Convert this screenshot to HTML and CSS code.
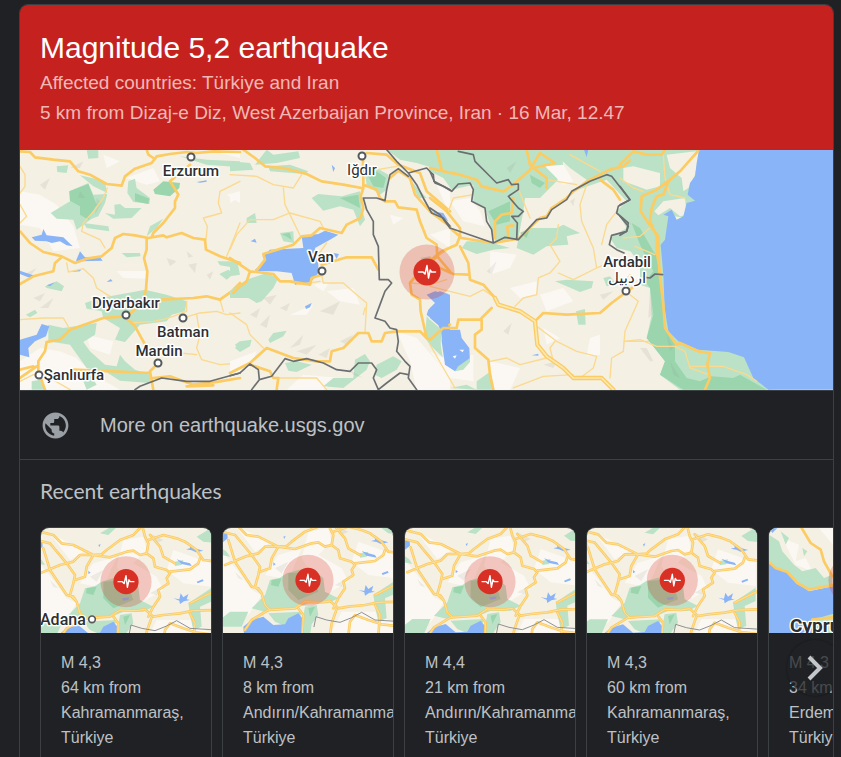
FILE: index.html
```html
<!DOCTYPE html>
<html lang="en">
<head>
<meta charset="utf-8">
<meta name="viewport" content="width=device-width, initial-scale=1">
<title>Magnitude 5,2 earthquake</title>
<link rel="stylesheet" href="styles.css">
</head>
<body>
<svg class="defs" aria-hidden="true">
  <defs>
    <symbol id="pulse" viewBox="-28 -28 56 56">
      <circle class="halo" r="27.5"/>
      <circle class="dot" r="13.6"/>
      <path class="wave" d="M-8.500 0H-4l2 2L0-6.500 1.500 6 3.200-2 4.500 0H8.500"/>
    </symbol>
    <!-- Terrain around Kahramanmaraş, shared by four cards -->
    <path id="maras-roads" d="M30 35 70 45 95 70 130 75 160 90 190 105 215 103 230 90 270 60 310 45 330 24 335 10M20 60 60 70 85 100 110 130 135 165 130 190 120 225 140 245 150 280 165 295M40 85 60 150 80 180 110 225 130 230 140 245M30 160 90 135 130 125 150 105 190 105 240 112 290 95 310 92 330 105 350 100M335 10 345 50 355 70 350 100 370 115 375 140 410 150 420 160 410 175 415 190 385 210 390 230 370 260 355 290M355 60 400 45 440 55 465 65 500 90 520 120 560 125M360 45 390 80 400 110 435 130M420 155 480 148 505 130 510 115M190 105 170 140 165 170 135 180M90 355 110 325 160 295 240 290 270 270 320 272 345 268 370 290 400 285 450 280 490 272 560 270M250 290 265 310 262 370M365 292 350 335 345 370M480 280 495 310 490 370M480 250 520 230 560 210M400 370 405 330 420 310 460 325 500 338 560 345"/>
    <g id="maras">
      <path class="land" d="M-20-20H600V400H-20Z"/>
      <path class="pale" d="M20 120 70 180 110 235 140 250 100 310 20 340ZM280 60 340 50 350 90 310 130 380 170 400 210 330 250 260 140ZM430 90 543 130V200L460 190 410 150ZM380 300 480 300 543 340V400H330ZM60 40 120 70 170 90 120 120 90 80ZM190 130 260 110 230 180 200 200 150 190Z"/>
      <path class="wood" d="M210 40 240 22 260 22 235 45ZM500 50 543 24 570 40V70L520 65ZM165 205 195 198 215 185 250 175 290 170 325 200 330 240 370 260 340 275 280 275 245 290 150 300 110 290 150 250ZM270 285 305 280 310 310 290 338 285 370 240 370 260 340ZM20 320 45 300 100 300 80 345H20ZM475 250 543 205V245L510 260 515 320 490 330 480 285ZM160 305 260 300 255 315 215 345 180 330ZM435 125 460 120 455 135 435 138ZM20 110 35 120 45 135 20 130Z"/>
      <path class="deep" d="M170 205 200 200 190 225 168 220ZM220 185 290 180 310 240 250 265 220 235ZM280 290 300 285 285 315Z"/>
      <path class="shade" d="M180 170 220 150 200 185ZM360 220 395 200 380 225ZM360 40 400 60 380 70ZM60 180 85 205 70 200Z"/>
      <path class="water" d="M90 400 85 345 110 325 145 315 175 340 210 338 220 320 250 305 262 320 258 400ZM468 88 480 85 479 70 488 83 520 92 498 97 485 91ZM430 235 448 238 452 220 460 232 475 222 470 238 480 240 462 244 450 252 448 242ZM440 118 460 125 480 130 485 138 455 132ZM500 185 518 178 521 183 503 190ZM275 235 298 232 295 240 280 242ZM20 60 37 65 38 80 20 95ZM205 75 212 72 208 82ZM175 152 182 158 175 162Z"/>
      <use class="road" href="#maras-roads"/>
      <use class="road-core" href="#maras-roads"/>
      <path class="border fine" d="M297 345 303 315 335 325 375 332 410 318 440 302 480 325 560 330"/>
    </g>
  </defs>
</svg>

<main class="panel">
  <header class="alert">
    <h1 class="alert-title">Magnitude 5,2 earthquake</h1>
    <p class="alert-line">Affected countries: Türkiye and Iran</p>
    <p class="alert-line">5 km from Dizaj-e Diz, West Azerbaijan Province, Iran · 16 Mar, 12.47</p>
  </header>

  <svg class="map" viewBox="20 150 813 240" preserveAspectRatio="xMidYMid slice" role="img" aria-label="Map of the earthquake area">
    <path class="land" d="M0 100H900V450H0Z"/>
    <!-- West: Erzurum to Şanlıurfa -->
    <g transform="translate(20 148) scale(.3333)">
      <path class="pale" d="M0 130 60 140 110 170 160 235 180 300 100 310 60 240 0 230ZM290 370 380 370V392L310 390ZM0 640 60 600 120 610 170 630 220 680 300 725H0ZM250 20 300 40 260 60ZM560 5H660V30ZM620 140 660 130V165ZM200 560 280 580 270 620 210 600ZM320 90 400 60 420 100 380 110Z"/>
      <path class="wood" d="M92 195 150 160 148 130 205 105 220 140 262 138 255 165 235 205 215 212 170 245 160 215 110 212ZM325 100 345 92 350 120 390 150 388 168 340 162 322 135ZM255 195 285 200 283 170 300 168 315 180 365 180 335 210 280 212ZM110 55 145 52 140 75 112 72ZM180 82 225 92 255 105 262 135 220 115ZM190 225 265 235 268 250 200 240ZM480 25 560 35 660 40V58L560 50ZM200 5H235V30L205 32ZM390 235 430 212 410 240 380 265ZM305 315 360 315 362 325 320 328ZM592 340 660 340 650 360 600 352ZM598 378 625 365 640 378 620 395ZM340 432 375 425 440 440 500 460 495 490 455 500 440 520 360 530 315 582 285 575 300 540 250 510 245 490 200 482 195 465 240 450ZM85 530 130 540 230 525 225 560 190 582 210 610 255 650 290 655 300 620 315 640 345 665 390 680V705L300 698 255 670 200 660 150 590 85 580ZM18 500 45 485 52 495 30 508ZM75 415 110 400 132 415 125 430 80 420ZM35 700 60 695 75 725H35ZM190 700 210 680 230 710 200 725ZM645 590 660 580V610ZM640 420 660 410V440Z"/>
      <path class="deep" d="M148 130 205 108 222 150 230 170 205 215 180 200 180 175 150 158ZM345 135 388 152 385 168 345 160ZM400 125 430 100 480 105 478 120 450 145 405 138Z"/>
      <path class="shade" d="M60 110 90 90 75 125ZM230 150 245 165 225 200ZM180 130 195 150 175 150ZM440 330 470 340 450 355ZM505 350 530 345 525 375ZM560 380 580 370 570 395ZM500 310 520 325 505 330ZM60 480 100 450 85 480ZM40 450 75 435 60 460ZM10 380 50 360 30 385ZM150 60 190 40 180 60Z"/>
      <path class="water" d="M35 268 65 260 70 243 80 262 130 268 158 295 140 292 120 280 95 285 80 280 45 278ZM168 338 180 310 195 328 240 328 248 338 180 340ZM0 368 35 380 55 383 30 390 0 378ZM150 372 185 362 180 370ZM80 412 105 403 90 415ZM260 402 272 393 278 400ZM0 575 50 560 65 528 88 535 78 565 45 580 25 600 28 628 0 620ZM530 102 560 97V101L540 104Z"/>
      <path class="lane" d="M660 100 600 130 595 165 605 195 550 210 562 235 558 275M0 55 15 80V115L0 135M0 170 20 205 0 225M262 120 250 150 225 185 190 225 185 250 240 275 255 300M140 345 145 372 190 362 220 390 230 420 270 445M330 525 400 520 440 512 500 490 500 460M490 510 540 495 590 490 620 500 660 495M0 515 70 510 130 510 150 545M530 500 540 560 530 600 545 635 600 650 660 645M660 225 620 325M415 620 480 615 530 620M600 455 610 490M0 700 40 680 90 690 150 725"/>
      <path id="roads-west" class="road" d="M0 10 30 12 45 28 100 35 150 40 175 70 210 80 260 108 305 113 315 85 345 62 395 45 410 25 450 18 500 12 530 15 580 10 660 12M380 5 385 20 400 30M0 250 30 285 70 312 125 325 165 345 200 332 245 325 275 300 285 270 310 258 345 262 385 270 430 262 440 268 485 255 520 270 555 275 558 305 600 325 660 345M0 408 40 385 100 370 105 345 125 328M510 50 450 100 460 115 475 140 465 160V180L430 225 400 255 395 268M380 270V305L372 330 382 370 378 425 365 470 318 505 250 510 150 545 120 575 80 582 75 610 55 640V670L75 725M425 455 520 450 560 445 600 455 635 430 660 405M318 510 345 535 370 580 385 610M415 645 390 670 400 725M0 690 50 655M160 665 390 675M400 690 450 685 520 710 600 700 660 690M0 665 40 655M500 715 580 712"/>
      <path class="border" d="M345 725 360 715 425 690 500 700 570 700 660 675"/>
    </g>
    <!-- Van and Iğdır -->
    <g transform="translate(230 148) scale(.3333)">
      <path class="pale" d="M290 430 370 420 390 470 330 460ZM500 550 560 570 620 640 660 680V725H560L540 640ZM0 640 80 610 60 660 0 680ZM250 410 300 400 280 430ZM480 200 520 210 490 230ZM620 110 660 130V200ZM180 500 250 470 230 500ZM220 680 330 690 280 725H170ZM0 140 25 150 0 165ZM600 260 660 240V300Z"/>
      <path class="wood" d="M110 5 130 20 205 10 210 30 140 45 75 50ZM0 40 60 45 70 65 0 70ZM115 55 180 50 235 70 225 78 120 70ZM405 80 440 60 475 80 470 125 450 140 410 110ZM245 150 265 138 335 145 390 130 395 180 405 215 390 235 370 185 330 175 280 188ZM150 255 190 250 192 285 160 280ZM50 210 75 195 80 225 50 225ZM0 430 50 395 110 375 145 390 130 420 95 460 80 465 55 450 0 450ZM15 600 30 580 65 575 60 595 30 612ZM115 575 130 555 170 548 160 565 120 585ZM165 645 200 640 245 650 200 672 175 668ZM375 635 405 618 420 640 410 665 340 720 280 715 310 690 370 690ZM440 650 490 625 515 640 500 665 455 690 435 680ZM590 505 625 545 638 628 600 590 585 570ZM470 5H660V80L610 60 560 45 510 35ZM0 345 25 355 30 380 0 385ZM540 95 590 150 565 150ZM570 330 600 325V345Z"/>
      <path class="deep" d="M415 85 440 70 468 90 460 120 430 115ZM155 258 180 255 185 275ZM330 150 385 140 390 180Z"/>
      <path class="shade" d="M90 530 120 500 110 540ZM150 480 180 465 170 490ZM200 610 260 590 230 620ZM265 620 300 600 290 630ZM330 580 370 560 350 590ZM180 600 220 560 210 590ZM60 500 90 480 80 510ZM270 490 330 460 310 500ZM100 450 140 440 120 470ZM350 660 400 690 370 680Z"/>
      <path class="water" d="M75 365 105 340 98 325 120 305 220 300 215 265 265 258 285 248 325 260 300 275 255 300 265 350V375L240 405 195 410 185 375 140 370 85 370ZM310 315 327 318 320 332ZM305 50 315 60 310 72ZM62 280 75 272 80 284ZM225 475 245 465 240 478 228 483ZM590 440 615 430 660 440V660L645 630 635 560 625 530 590 500 595 485 615 465ZM605 190 640 195 655 220Z"/>
      <path class="lane" d="M0 80 80 85 130 110 190 120 215 80M160 120 165 170 180 200 210 262M0 305 20 260 60 215 130 215 180 195 270 220 280 240M275 380 280 405 340 405 380 440 410 465 405 555M0 495 50 530 60 560 100 600M265 320 290 285M405 480 400 500M145 690 260 690 290 725M600 340 660 300M545 405 600 410 650 395M200 410 270 400M410 70 500 55"/>
      <path class="road" d="M40 5 75 30 105 55 160 60 230 78 275 100 340 110 395 120M400 30 398 60 400 85V120L392 145 400 180 392 210 350 230 335 255 270 240 245 262 215 265 190 290 100 318 105 335 80 368M0 330 30 350 60 370 50 400 30 415 10 435M60 370 130 378 150 400 180 400 240 410 245 390 275 380M275 350 310 340 350 328 425 328 445 365M400 110 440 125 450 150 465 160 495 160 505 178 560 185 570 220 590 270 620 290 622 325 660 370M480 90 505 68 540 90 555 140 600 190 660 235M410 15 470 20 505 50 570 75 590 130 660 190M622 325 570 370 540 405 545 440 570 455 572 490 590 570 600 575 660 530M590 570 570 550 500 550 465 555 455 580 425 580 415 555 385 555 340 600 305 610 300 640 260 640 190 630 110 600 60 645 0 675M60 650 120 670 130 690 145 690 140 725M620 5 625 60"/>
      <path class="border" d="M400 150 440 150 465 158 470 125 480 80 505 62 535 85M400 150 410 185 430 220V260L445 295 448 395 475 395 485 405 465 430 450 470 435 510 465 520 480 540 500 545 505 580 500 610 525 640 540 655 535 690 560 725M0 683 30 675 60 648 85 665 88 695 125 685 165 632 190 640 230 632 280 645 320 665 360 670 385 645 425 645 440 665 430 690 445 725 470 705 510 675 535 680M88 695 65 725M470 5 500 40 535 75 560 110 580 150 605 195 640 210 660 235M535 75 590 60 610 80 612 100 660 125"/>
    </g>
    <!-- Urmia to Ardabil -->
    <g transform="translate(430 148) scale(.3333)">
      <path class="wood" d="M0 5H395L400 60 380 100 330 150 285 150 280 190 265 270 195 280 165 180 130 160V110L65 125 40 90 0 70ZM360 5H660V340L600 310 560 300 540 270 590 240 560 190 590 160 530 95 430 130 470 95 420 60ZM265 275 300 240 380 240 400 230 450 255 410 265 415 290 350 295 310 320 260 300ZM95 300 110 280 170 280 240 300 190 305 140 318ZM375 400 410 395 490 400 485 420 450 432ZM438 490 465 483 467 530 445 530ZM520 390 540 385 560 410 530 415ZM60 720 110 710 140 725ZM140 700 175 675 200 690 190 725H140ZM0 515 35 545 30 610 0 590Z"/>
      <path class="pale" d="M60 160 120 150 150 190 165 235 100 220ZM330 440 400 420 430 460 350 490ZM180 310 260 320 240 360 180 380ZM480 570 510 560 510 620 470 625ZM240 420 320 400 320 440 270 450ZM0 610 60 640 130 620 130 700 60 690ZM180 640 270 660 240 725H190ZM340 540 390 570 350 590ZM540 325 620 345 650 400 560 385ZM345 55 400 50 430 100 400 110Z"/>
      <path class="deep" d="M175 190 240 160V220L200 230ZM300 80 345 105 330 120 305 105ZM600 225 650 270 660 320 620 280ZM270 255 300 240 290 270Z"/>
      <path class="shade" d="M220 550 245 525 235 560ZM170 370 200 340 185 380ZM340 650 380 640 370 660ZM420 160 435 150 430 175ZM230 60 260 40 240 75ZM510 440 550 430 520 455Z"/>
      <path class="water" d="M0 480 25 460 5 440 30 430 55 438 58 460 45 480 50 520 60 545 90 545 95 570 118 600 120 640 75 670 45 650 35 580V540L0 510ZM305 622 325 617 325 623ZM462 5H475L470 28Z"/>
      <path class="pale" d="M88 605 102 605 98 613ZM68 625 80 622 75 632Z"/>
      <path class="wood" d="M85 655 120 630V642L100 665 75 670Z"/>
      <path class="lane" d="M0 415 60 430 120 445 160 425 195 450M255 475 280 450 320 440 325 390 360 375 390 340 360 290 380 270 385 230M385 375 430 395 500 360 490 300 455 220 450 170 470 110M500 360 550 340M515 290 530 230 560 190M320 535 380 580 440 610 500 625 490 660 450 690M180 640 230 630 270 650 350 630M375 580 360 600 370 640M250 720 340 685 430 680M600 440 625 460 585 550 580 610 545 630 540 690M585 580 660 580M0 590 40 660 75 720M55 190 70 150 130 140M260 110 300 210M420 20 510 70M350 95 440 110"/>
      <path class="road" d="M0 60 40 70 90 80 140 95 155 115 220 130 250 110 300 65 330 15 375 45 310 60 350 90V120M20 5 35 65M290 5 300 50M0 150 50 190 90 240V265M60 240 95 270 190 285 265 272 330 210 350 205 365 180 410 150 430 130 480 95 540 65 580 55 610 30 640 12 660 5M510 95 550 125 570 155M90 265 80 290 35 310 10 330M90 295 115 345 120 395 160 410 195 450M0 575 40 540 80 540 85 515 150 515 185 480M155 515V545L135 560V600L175 635 180 680 190 725M320 515 340 495 410 500 510 495 545 465 585 435 640 395M195 270V220L215 200 245 195 250 150M235 270 232 235 250 232M635 130 630 190 660 240M0 330 30 360 70 378 115 380"/>
      <path class="highway" d="M195 450 205 470 270 490 315 520 322 590 350 625 400 660 430 690 515 690 550 725"/>
      <path class="highway-core" d="M195 450 205 470 270 490 315 520 322 590 350 625 400 660 430 690 515 690 550 725"/>
      <path class="border" d="M0 70 15 105 40 115 65 130 85 108 120 105 130 125 125 160 165 180 170 220 185 245 190 285M85 10 130 20 135 40 170 75 200 105 235 95 245 110 265 108V125L235 145 265 180 280 190 265 205 245 205 262 225 260 275M0 180 30 200 60 240 190 285 225 268 265 275 320 215 350 210 365 185 410 155 425 130 480 100 530 80 545 85 600 155 565 175 560 195 595 225 590 250 545 262 538 290 560 305 582 315"/>
    </g>
    <!-- Caspian coast -->
    <g transform="translate(620 148) scale(.3333)">
      <path class="wood" d="M32 5H245V90L215 140 235 160 205 210 160 205 145 275 140 380 145 500 160 560 240 600 325 605 380 620 410 690 455 725H180L120 680 135 640 80 570 95 500 90 420 60 410 60 350 32 310Z"/>
      <path class="deep" d="M35 225 60 240 100 310 118 330 120 370 128 480 135 545 165 590V640L200 690 240 700 275 685 340 690 360 680 440 725H190L120 680 135 640 80 570 100 500 90 420 75 400 100 370 60 290Z"/>
      <path class="land" d="M10 60 40 55 120 75V115L80 125 40 110 10 100ZM140 20 240 8 225 80 205 120 190 130 185 90 150 60ZM103 190 130 160 195 150 200 200 180 205 150 180 115 202Z"/>
      <path class="shade" d="M60 600 80 600 100 640 90 640ZM90 430 98 500 85 510ZM140 560 160 600 150 610ZM150 640 180 690 160 680Z"/>
      <path class="water" d="M237 5 230 45 225 85 210 105 203 140 225 158 200 165 190 205 170 215 155 185 130 200 145 205 135 275 122 290 130 380 134 480 145 550 175 580 235 605 325 612 372 628 400 690 445 725H645V5Z"/>
      <path class="lane" d="M130 20 135 90 150 140 195 150M0 415 30 380M12 580 60 575 110 595 165 595 195 610 210 660 265 680M210 655 310 655 380 680 410 700M10 270 60 265 90 240M45 295 105 320M0 90 40 120 70 130"/>
      <path class="road" d="M0 50 40 10 80 20 125 20 135 5M235 8 180 70 145 100 130 140 110 145 95 180 90 220 110 265V310L120 370M150 95 110 125 65 145 62 190 85 225 115 265 118 370 130 470 135 540 170 590 180 585 235 610 270 615 262 650 270 690 255 725"/>
      <path class="border" d="M0 115 30 155 0 170M0 205 25 235 20 250 0 262M75 388 90 390 105 378 128 380"/>
    </g>
    <g class="town">
      <circle cx="191" cy="157" r="3.500"/><circle cx="362" cy="156" r="3.500"/><circle cx="322" cy="271" r="3.500"/><circle cx="126" cy="315" r="3.500"/><circle cx="183" cy="318" r="3.500"/><circle cx="158" cy="363" r="3.500"/><circle cx="39" cy="375" r="3.500"/><circle cx="626" cy="291" r="3.500"/>
    </g>
    <g class="place">
      <text x="191" y="176">Erzurum</text>
      <text class="small" x="362" y="175">Iğdır</text>
      <text x="321" y="262">Van</text>
      <text x="126" y="308">Diyarbakır</text>
      <text x="183" y="337">Batman</text>
      <text x="159" y="356">Mardin</text>
      <text x="74" y="380">Şanlıurfa</text>
      <text x="627" y="267">Ardabil</text>
      <text class="small" x="627" y="283">اردبیل</text>
    </g>
    <use href="#pulse" x="399" y="244" width="56" height="56"/>
  </svg>

  <a class="source" href="#source">
    <svg class="globe" viewBox="0 0 24 24" aria-hidden="true"><path d="M12 2C6.480 2 2 6.480 2 12s4.480 10 10 10 10-4.480 10-10S17.520 2 12 2zm-1 17.930c-3.950-.49-7-3.850-7-7.930 0-.62.080-1.210.210-1.790L9 15v1c0 1.100.9 2 2 2v1.930zm6.900-2.540c-.26-.81-1-1.390-1.900-1.390h-1v-3c0-.55-.45-1-1-1H8v-2h2c.55 0 1-.45 1-1V7h2c1.100 0 2-.9 2-2v-.41c2.930 1.190 5 4.060 5 7.410 0 2.080-.8 3.970-2.100 5.390z"/></svg>
    <span>More on earthquake.usgs.gov</span>
  </a>

  <section class="recent" aria-labelledby="recent-title">
    <h2 class="recent-title" id="recent-title">Recent earthquakes</h2>
    <div class="carousel">
      <a class="quake" href="#q1">
        <svg class="thumb" viewBox="0 0 510 315" preserveAspectRatio="xMidYMid slice" aria-hidden="true">
          <use href="#maras" x="-33" y="-24"/>
          <circle class="thumb-town" cx="153" cy="274" r="10"/>
          <text class="thumb-place" x="-3" y="290">Adana</text>
          <use href="#pulse" x="177" y="83" width="156" height="156"/>
        </svg>
        <span class="quake-text">M 4,3<br>64 km from<br>Kahramanmaraş,<br>Türkiye</span>
      </a>
      <a class="quake" href="#q2">
        <svg class="thumb" viewBox="0 0 510 315" preserveAspectRatio="xMidYMid slice" aria-hidden="true">
          <use href="#maras" x="-24" y="-49"/>
          <use href="#pulse" x="177" y="79" width="156" height="156"/>
        </svg>
        <span class="quake-text">M 4,3<br>8 km from<br>Andırın/Kahramanmaraş,<br>Türkiye</span>
      </a>
      <a class="quake" href="#q3">
        <svg class="thumb" viewBox="0 0 510 315" preserveAspectRatio="xMidYMid slice" aria-hidden="true">
          <use href="#maras" x="-23" y="-27"/>
          <use href="#pulse" x="177" y="83" width="156" height="156"/>
        </svg>
        <span class="quake-text">M 4,4<br>21 km from<br>Andırın/Kahramanmaraş,<br>Türkiye</span>
      </a>
      <a class="quake" href="#q4">
        <svg class="thumb" viewBox="0 0 510 315" preserveAspectRatio="xMidYMid slice" aria-hidden="true">
          <use href="#maras" x="-37" y="-26"/>
          <use href="#pulse" x="178" y="79" width="156" height="156"/>
        </svg>
        <span class="quake-text">M 4,3<br>60 km from<br>Kahramanmaraş,<br>Türkiye</span>
      </a>
      <a class="quake" href="#q5">
        <svg class="thumb" viewBox="0 0 510 315" preserveAspectRatio="xMidYMid slice" aria-hidden="true">
          <path class="water" d="M0 0H510V315H0Z"/>
          <path class="land" d="M0 0H510V165L190 175 120 190 90 170 55 130 20 120 0 100Z"/>
          <path class="pale" d="M40 30 90 50 80 100 110 90 130 130 80 110ZM150 0H200V60Z"/>
          <path class="wood" d="M0 20 30 40 40 70 75 110 100 130 140 120 165 150 190 140V172L120 188 90 170 55 130 20 120 0 100ZM35 10 60 30 50 50ZM100 60 115 70 105 85ZM130 275 190 258 240 260V315H170Z"/>
          <path class="water" d="M0 0H25L10 15Z"/>
          <path class="road" d="M0 102 20 120 55 132 85 165 120 184 200 170M98 0 125 45 155 65 165 100 190 145M130 275 190 268"/>
          <use href="#pulse" x="177" y="79" width="156" height="156"/>
          <text class="thumb-place large" x="63" y="312">Cyprus</text>
        </svg>
        <span class="quake-text">M 4,3<br>34 km from<br>Erdemli,<br>Türkiye</span>
      </a>
    </div>
    <button class="next" type="button" aria-label="Next">
      <svg viewBox="0 0 56 56" aria-hidden="true"><path d="M22 17 33 28 22 39"/></svg>
    </button>
  </section>
</main>
</body>
</html>
```

FILE: styles.css
```css
* {
  box-sizing: border-box;
}

body {
  margin: 0;
  height: 100vh;
  overflow: hidden;
  background: #202124;
  color: #bdc1c6;
  font-family: "Liberation Sans", Arial, sans-serif;
}

a {
  color: inherit;
  text-decoration: none;
}

.defs {
  position: absolute;
  width: 0;
  height: 0;
}

.panel {
  margin: 4px 7px 0 19px;
  border: 1px solid #3c4043;
  border-radius: 9px;
  overflow: hidden;
}

.alert {
  padding: 23px 20px 22px;
  background: #c5221f;
}

.alert-title {
  margin: 0;
  color: #fff;
  font-size: 30px;
  font-weight: 400;
  line-height: 40px;
}

.alert-line {
  margin: 0;
  color: #f0b8b6;
  font-size: 19px;
  line-height: 30px;
}

.map {
  display: block;
  width: 100%;
  height: 240px;
}

.land { fill: #f4f0e4; }
.pale { fill: #fbf8f3; }
.wood { fill: #bbe2c6; }
.deep { fill: #9ad5ae; }
.shade { fill: #8a8a7a; opacity: .13; }
.water { fill: #8ab4f8; }

.lane,
.road,
.road-core,
.highway,
.highway-core,
.border {
  fill: none;
  stroke-linejoin: round;
  stroke-linecap: round;
}

.lane {
  stroke: #fbd98e;
  stroke-width: 4;
}

.road {
  stroke: #fccb62;
  stroke-width: 8;
}

.road-core {
  stroke: #fde09a;
  stroke-width: 3;
}

.highway {
  stroke: #fccb62;
  stroke-width: 13;
}

.highway-core {
  stroke: #fde8ae;
  stroke-width: 5;
}

.border {
  stroke: #6c6f72;
  stroke-width: 5;
}

.border.fine {
  stroke: #8e9092;
  stroke-width: 3;
}

.town circle,
.thumb-town {
  fill: #fff;
  stroke: #55585c;
  stroke-width: 2;
}

.thumb-town {
  stroke-width: 5;
}

.place text,
.thumb-place {
  fill: #2d2f33;
  stroke: #fff;
  stroke-width: 3;
  paint-order: stroke;
  stroke-linejoin: round;
  font-family: Roboto, "DejaVu Sans", sans-serif;
  font-size: 15px;
  font-weight: 500;
  text-anchor: middle;
}

.place .small {
  font-weight: 400;
}

.thumb-place {
  font-size: 48px;
  stroke-width: 8;
  text-anchor: start;
}

.thumb-place.large {
  font-size: 57px;
  font-weight: 700;
}

.halo {
  fill: #d93025;
  opacity: .25;
}

.dot {
  fill: #d93025;
}

.wave {
  fill: none;
  stroke: #fff;
  stroke-width: 1.5;
  stroke-linejoin: round;
  stroke-linecap: round;
}

.source {
  display: flex;
  align-items: center;
  gap: 29px;
  height: 70px;
  padding: 0 20px;
  border-top: 1px solid #3c4043;
  border-bottom: 1px solid #3c4043;
  font-size: 20px;
}

.globe {
  width: 31px;
  height: 31px;
  fill: #9aa0a6;
}

.recent {
  position: relative;
}

.recent-title {
  margin: 0;
  padding: 19px 20px 24px;
  font-family: Lato, "Open Sans", sans-serif;
  font-size: 21px;
  font-weight: 400;
  line-height: 24px;
}

.carousel {
  display: flex;
  gap: 10px;
  padding-left: 20px;
  overflow: hidden;
}

.quake {
  flex: 0 0 172px;
  border: 1px solid #3c4043;
  border-radius: 9px;
  overflow: hidden;
}

.thumb {
  display: block;
  width: 100%;
  height: 105px;
}

.quake-text {
  display: block;
  padding: 17px 0 24px 20px;
  font-size: 16px;
  line-height: 25px;
}

.next {
  position: absolute;
  top: 180px;
  right: -10px;
  width: 56px;
  height: 56px;
  padding: 0;
  border: 0;
  border-radius: 50%;
  background: rgba(32, 33, 36, .75);
  box-shadow: 0 0 2px rgba(0, 0, 0, .5);
}

.next svg {
  display: block;
  fill: none;
  stroke: #c4c7ca;
  stroke-width: 4;
}
```
